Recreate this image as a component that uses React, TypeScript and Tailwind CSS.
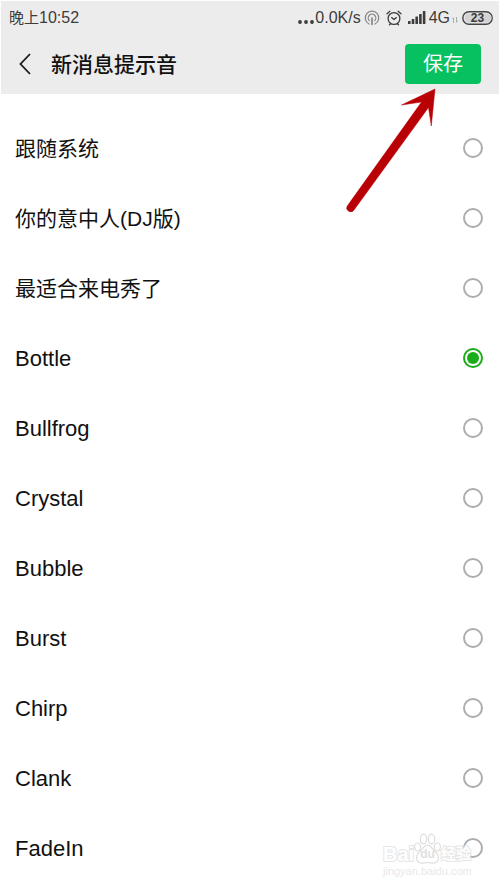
import { useState } from "react";

const tones = [
  { name: "跟随系统", size: "text-[21px]" },
  { name: "你的意中人(DJ版)", size: "text-[21px]" },
  { name: "最适合来电秀了", size: "text-[21px]" },
  { name: "Bottle", size: "text-[22px]" },
  { name: "Bullfrog", size: "text-[22px]" },
  { name: "Crystal", size: "text-[22px]" },
  { name: "Bubble", size: "text-[22px]" },
  { name: "Burst", size: "text-[22px]" },
  { name: "Chirp", size: "text-[22px]" },
  { name: "Clank", size: "text-[22px]" },
  { name: "FadeIn", size: "text-[22px]" },
];

function HotspotIcon() {
  return (
    <svg width="16" height="16" viewBox="0 0 16 16" fill="none" stroke="#858585" strokeWidth="1.2" strokeLinecap="round" aria-hidden="true">
      <path d="M5 14a6.800 6.800 0 1 1 6 0" />
      <path d="M5.300 10.600a3.800 3.800 0 1 1 5.400 0" />
      <path d="M8 8v6.300" strokeWidth="1.700" />
    </svg>
  );
}

function AlarmIcon() {
  return (
    <svg width="16" height="16" viewBox="0 0 16 16" fill="none" stroke="#3c3c3c" strokeWidth="1.300" strokeLinecap="round" strokeLinejoin="round" aria-hidden="true">
      <circle cx="8" cy="8.500" r="5.900" />
      <path d="M5.600 7.600 8 9.600l2.400-2" />
      <path d="M1 3.800 3.900 1.300M15 3.800l-2.900-2.500M3.500 14.700l1-1M12.500 14.700l-1-1" />
    </svg>
  );
}

function SignalIcon() {
  return (
    <svg width="18" height="13" viewBox="0 0 18 13" fill="#3c3c3c" aria-hidden="true">
      <rect x="0" y="10" width="2.600" height="3" rx=".5" />
      <rect x="3.700" y="8" width="2.600" height="5" rx=".5" />
      <rect x="7.400" y="5.500" width="2.600" height="7.500" rx=".5" />
      <rect x="11.100" y="3" width="2.600" height="10" rx=".5" />
      <rect x="14.800" y="0" width="2.600" height="13" rx=".5" />
    </svg>
  );
}

function BatteryIcon() {
  return (
    <span className="relative ml-1 flex h-[14px] w-[31px] items-center justify-center">
      <svg className="absolute inset-0" width="31" height="14" viewBox="0 0 31 14" aria-hidden="true">
        <rect x=".8" y=".8" width="29.400" height="12.400" rx="6.200" fill="#ececec" stroke="#444" strokeWidth="1.400" />
        <path d="M7 2.500h18a4.500 4.500 0 0 1 0 9H7a4.500 4.500 0 0 1 0-9Z" fill="#d3d3d3" />
      </svg>
      <span className="relative text-[12px] leading-3 font-bold">23</span>
    </span>
  );
}

function StatusBar() {
  return (
    <div className="flex h-[33px] items-center justify-between pr-[6px] pl-2 text-base leading-5 text-[#3c3c3c]">
      <div className="flex items-center">
        <span className="text-[15px]">晚上</span>
        <span>10:52</span>
      </div>
      <div className="flex items-center">
        <svg className="mt-2 mr-px" width="16" height="4" viewBox="0 0 16 4" fill="#3c3c3c" aria-hidden="true">
          <circle cx="2" cy="2" r="1.900" />
          <circle cx="8" cy="2" r="1.900" />
          <circle cx="14" cy="2" r="1.900" />
        </svg>
        <span className="mr-[3px]">0.0K/s</span>
        <HotspotIcon />
        <span className="ml-[6px] flex"><AlarmIcon /></span>
        <span className="ml-[6px] flex"><SignalIcon /></span>
        <span className="ml-[3px]">4G</span>
        <svg className="mt-1 ml-[2px]" width="6" height="6" viewBox="0 0 6 6" fill="none" stroke="#9a9a9a" strokeWidth="0.800" aria-hidden="true">
          <path d="M1.500 6V.8L.3 2M4.500 0v5.200L5.700 4" />
        </svg>
        <BatteryIcon />
      </div>
    </div>
  );
}

function PointerArrow() {
  return (
    <svg className="pointer-events-none absolute top-[88px] right-[64px]" width="90" height="124" viewBox="0 0 90 124" fill="#b90005" aria-hidden="true">
      <path d="M89 1 55.500 17 75.500 14 1.400 117.800a3.800 3.800 0 0 0 6.600 4.200L82.500 19.500 85.300 38Z" stroke="#b90005" strokeWidth=".5" />
    </svg>
  );
}

function Watermark() {
  return (
    <div className="pointer-events-none absolute right-[28px] bottom-[10px] w-[89px] text-white" aria-hidden="true">
      <div className="flex h-[32px] items-end">
        <span className="w-[31px] text-[20px] leading-5 font-bold [-webkit-text-stroke:2px_#e6e6e6] [paint-order:stroke]">Bai</span>
        <span className="relative flex h-[31px] w-[27px] items-end justify-center">
          <svg className="absolute inset-0" width="27" height="31" viewBox="0 0 27 31" fill="#fff" stroke="#dedede" strokeWidth="1.200">
            <ellipse cx="3.600" cy="14" rx="3" ry="4" />
            <ellipse cx="9.500" cy="6" rx="3.200" ry="4.800" />
            <ellipse cx="17.500" cy="6" rx="3.200" ry="4.800" />
            <ellipse cx="23.400" cy="14" rx="3" ry="4" />
            <path d="M13.500 12c-4 0-5 5-8 7-4 3-4 10 1 11 3 .5 4-.5 7-.5s4 1 7 .5c5-1 5-8 1-11-3-2-4-7-8-7Z" />
          </svg>
          <span className="relative pb-1 text-[12px] leading-3 font-bold text-[#e0e0e0]">du</span>
        </span>
        <span className="text-[15px] leading-5 font-bold whitespace-nowrap [-webkit-text-stroke:2px_#e6e6e6] [paint-order:stroke]">经验</span>
      </div>
      <div className="text-[11px] leading-[14px] text-[#e9e9e9]">jingyan.baidu.com</div>
    </div>
  );
}

export default function App() {
  const [selected, setSelected] = useState("Bottle");
  return (
    <div className="relative min-h-screen overflow-hidden bg-white font-['Liberation_Sans','Noto_Sans_CJK_SC',sans-serif] text-[#111]">
      <header className="border border-b-0 border-white bg-[#ececec]">
        <StatusBar />
        <div className="flex h-[60px] items-center pr-[18px] pl-[14px]">
          <button type="button" aria-label="返回" className="mr-3 flex h-10 w-6 items-center">
            <svg width="20" height="24" viewBox="0 0 20 24" fill="none" stroke="#1a1a1a" strokeWidth="1.800" aria-hidden="true">
              <path d="M15 2 5.500 12 15 22" />
            </svg>
          </button>
          <h1 className="flex-1 pt-[2px] text-[21px] leading-8 font-medium">新消息提示音</h1>
          <button type="button" className="h-10 w-[76px] rounded bg-[#07c160] text-[20px] leading-8 text-white">
            保存
          </button>
        </div>
      </header>
      <main className="pt-[19px]">
        {tones.map((tone) => (
          <label key={tone.name} className="flex h-[70px] items-center justify-between pr-[17px] pl-[15px]">
            <span className={`${tone.size} pt-[2px] leading-8`}>{tone.name}</span>
            <input
              type="radio"
              name="tone"
              checked={selected === tone.name}
              onChange={() => setSelected(tone.name)}
              className="size-5 appearance-none rounded-full border-2 border-[#adadad] bg-clip-content p-[2px] checked:border-[#1aad19] checked:bg-[#1aad19]"
            />
          </label>
        ))}
      </main>
      <PointerArrow />
      <Watermark />
    </div>
  );
}
